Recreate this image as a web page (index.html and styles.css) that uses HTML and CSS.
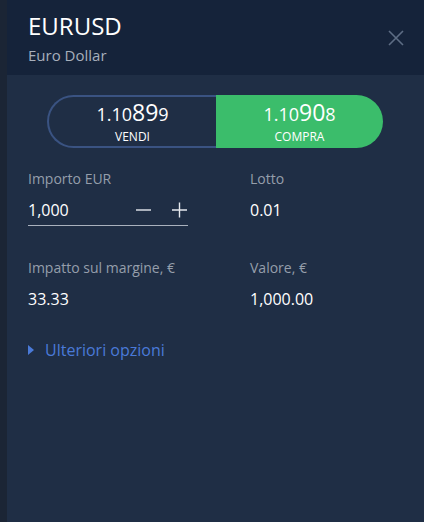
FILE: index.html
```html
<!DOCTYPE html>
<html lang="it">
<head>
    <meta charset="UTF-8">
    <meta name="viewport" content="width=device-width, initial-scale=1.0">
    <title>EURUSD</title>
    <link rel="stylesheet" href="styles.css">
</head>
<body>

    <!-- Left edge strip -->
    <div class="strip"></div>

    <!-- Order panel -->
    <div class="panel">
        <div class="header">
            <div class="titles">
                <h1>EURUSD</h1>
                <div class="subtitle">Euro Dollar</div>
            </div>
            <button class="close" aria-label="Chiudi">
                <svg width="16" height="16" viewBox="0 0 16 16">
                    <path d="M1 1 L15 15 M15 1 L1 15" stroke="#5d6d84" stroke-width="1.6" fill="none"/>
                </svg>
            </button>
        </div>

        <div class="content">
            <div class="trade">
                <button class="side sell">
                    <span class="price">1.10<b>89</b>9</span>
                    <span class="side-label">VENDI</span>
                </button>
                <button class="side buy">
                    <span class="price">1.10<b>90</b>8</span>
                    <span class="side-label">COMPRA</span>
                </button>
            </div>

            <div class="fields">
                <div class="field">
                    <div class="label">Importo EUR</div>
                    <div class="amount">
                        <span class="value">1,000</span>
                        <span class="steps">
                            <svg width="16" height="16" viewBox="0 0 16 16">
                                <path d="M0 8 H15" stroke="#e6e9ee" stroke-width="1.4"/>
                            </svg>
                            <svg width="16" height="16" viewBox="0 0 16 16">
                                <path d="M0 8 H15 M7.5 0.5 V15.5" stroke="#e6e9ee" stroke-width="1.4"/>
                            </svg>
                        </span>
                    </div>
                </div>
                <div class="field">
                    <div class="label">Lotto</div>
                    <div class="value plain">0.01</div>
                </div>
                <div class="field">
                    <div class="label">Impatto sul margine, €</div>
                    <div class="value plain">33.33</div>
                </div>
                <div class="field">
                    <div class="label">Valore, €</div>
                    <div class="value plain">1,000.00</div>
                </div>
            </div>

            <div class="more">
                <svg width="7" height="10" viewBox="0 0 7 10">
                    <path d="M0 0 L6 5 L0 10 Z" fill="#4a7ad8"/>
                </svg>
                Ulteriori opzioni
            </div>
        </div>
    </div>

</body>
</html>
```

FILE: styles.css
```css
body, html {
    margin: 0;
    padding: 0;
    width: 100%;
    height: 100%;
    font-family: "Open Sans", Arial, sans-serif;
    overflow: hidden;
}

body {
    display: flex;
    background-color: #1f2e45;
}

.strip {
    width: 7px;
    background-color: #1b2535;
}

.panel {
    flex: 1;
    display: flex;
    flex-direction: column;
    background-color: #1f2e45;
}

.header {
    height: 75px;
    background-color: #15233a;
    display: flex;
    justify-content: space-between;
    padding-left: 21px;
    padding-right: 20px;
    box-sizing: border-box;
}

h1 {
    margin: 11px 0 0 0;
    font-size: 24px;
    line-height: 30px;
    font-weight: 400;
    color: #ffffff;
}

.subtitle {
    font-size: 15px;
    line-height: 20px;
    margin-top: 4px;
    color: #a7afbb;
}

.close {
    background: none;
    border: none;
    padding: 0;
    margin-top: 30px;
    height: 16px;
    cursor: pointer;
}

.content {
    padding: 20px 0 0 21px;
}

.trade {
    display: flex;
    margin-left: 19px;
    width: 336px;
    height: 53px;
}

.side {
    flex: 1;
    display: flex;
    flex-direction: column;
    align-items: center;
    font-family: inherit;
    color: #ffffff;
    padding: 0;
    cursor: pointer;
}

.sell {
    width: 169px;
    background-color: #1f2e45;
    border: 2px solid #3a5382;
    border-right: none;
    border-radius: 27px 0 0 27px;
}

.buy {
    width: 167px;
    background-color: #3bbd6b;
    border: none;
    border-radius: 0 27px 27px 0;
}

.price {
    font-size: 18px;
    line-height: 22px;
    margin-top: 6px;
}

.sell .price {
    margin-top: 4px;
}

.price b {
    font-weight: 400;
    font-size: 23px;
}

.side-label {
    font-size: 12px;
    line-height: 16px;
    margin-top: 4px;
}

.fields {
    display: grid;
    grid-template-columns: 222px 1fr;
    row-gap: 32px;
    margin-top: 21px;
}

.label {
    font-size: 14px;
    line-height: 20px;
    color: #959eab;
}

.value {
    font-size: 16px;
    line-height: 20px;
    color: #ffffff;
}

.plain {
    margin-top: 11px;
}

.amount {
    width: 160px;
    display: flex;
    justify-content: space-between;
    align-items: center;
    margin-top: 11px;
    padding-bottom: 5px;
    border-bottom: 1px solid #a9b1bd;
}

.steps {
    display: flex;
    gap: 20px;
}

.more {
    display: flex;
    align-items: center;
    gap: 10px;
    margin-top: 30px;
    font-size: 16px;
    color: #4a7ad8;
    cursor: pointer;
}
```
